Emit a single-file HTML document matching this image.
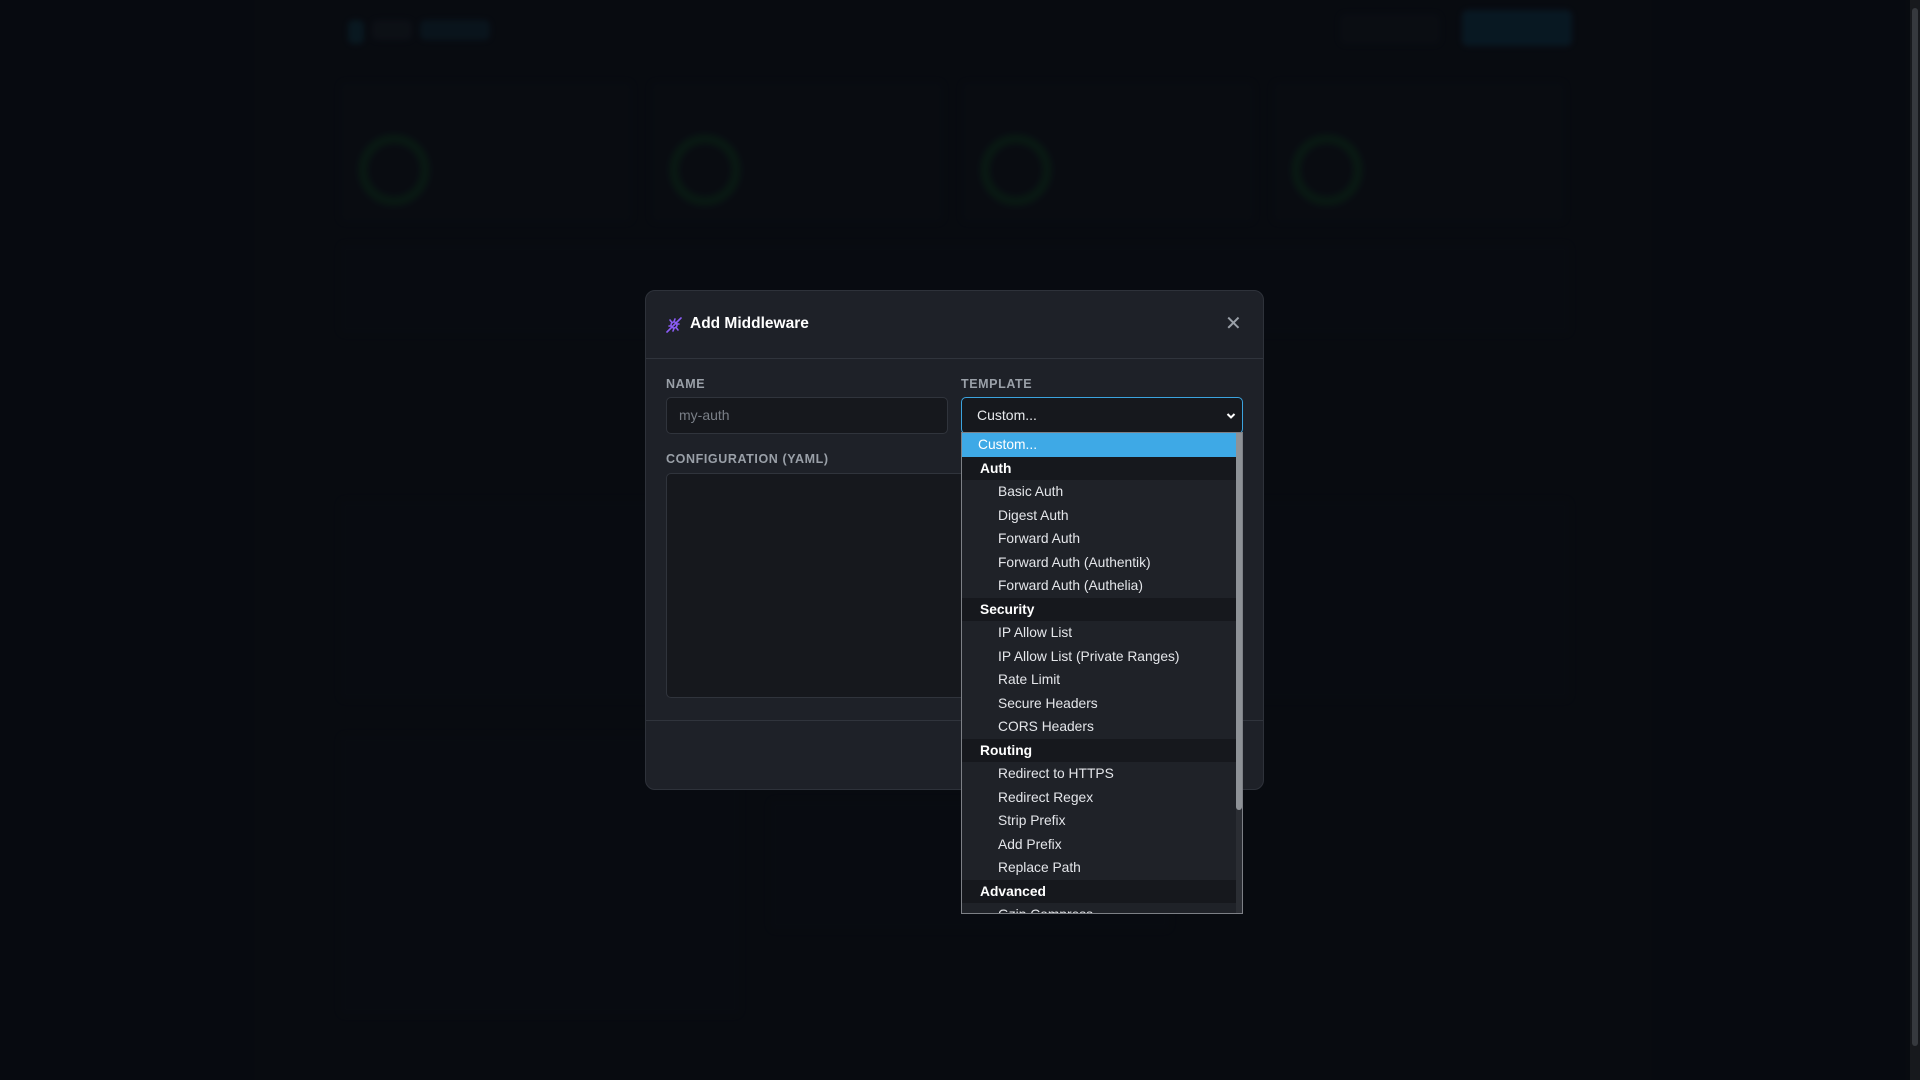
<!DOCTYPE html>
<html><head><meta charset="utf-8"><style>
*{box-sizing:border-box;margin:0;padding:0}
html,body{width:1920px;height:1080px;overflow:hidden;background:#0a0e15;font-family:"Liberation Sans",Arial,sans-serif}
.bg{position:absolute;inset:0;filter:blur(3px);opacity:.6}
.b{position:absolute;border-radius:6px}
.overlay{position:absolute;inset:0;background:rgba(5,7,11,.5)}
.sb{position:absolute;left:1910px;top:0;width:10px;height:1080px;background:#17191d}
.sb div{position:absolute;left:2px;top:8px;width:6px;height:1038px;background:#36393e;border-radius:3px}
.modal{position:absolute;left:645px;top:290px;width:619px;height:500px;background:#1e2128;border:1px solid #2e323a;border-radius:10px}
.hd{position:absolute;left:0;top:0;width:100%;height:68px;border-bottom:1px solid #30343c}
.title{position:absolute;left:44px;top:24px;color:#fff;font-weight:bold;font-size:15.5px}
.close{position:absolute;left:579px;top:20px;color:#9aa0a8;font-size:20px}
.lbl{position:absolute;color:#9aa0a8;font-weight:bold;font-size:12.5px;letter-spacing:.6px}
.inp{position:absolute;background:#16181d;border:1px solid #30343c;border-radius:5px}
.ft{position:absolute;left:0;top:429px;width:100%;border-top:1px solid #30343c}
.dd{position:absolute;left:961px;top:432px;width:282px;height:482px;background:#1f2228;border:1px solid #7d8086;overflow:hidden}
.row{height:23.5px;line-height:23.5px;font-size:13.8px;color:#e4e6ea;padding-left:36px;width:276px}
.row.g{background:#16181d;font-weight:bold;padding-left:18px;color:#fff}
.row.sel{background:#3ea9e6;color:#fff;padding-left:16px}
.dsb{position:absolute;right:0;top:0;width:6px;height:100%;background:#2a2d33}
.dsb div{position:absolute;left:0;top:0;width:6px;height:377px;background:#8e9297;border-radius:0 0 3px 3px}
</style></head><body>
<div class="bg">
<div class="b" style="left:348px;top:20px;width:16px;height:24px;background:#0f3a4a"></div>
<div class="b" style="left:372px;top:20px;width:40px;height:20px;background:#1a1f27"></div>
<div class="b" style="left:420px;top:20px;width:70px;height:20px;background:#0f2e3d"></div>
<div class="b" style="left:1462px;top:10px;width:110px;height:36px;background:#0d3a52"></div>
<div class="b" style="left:1340px;top:14px;width:100px;height:30px;background:#12161d"></div>
<div class="b" style="left:340px;top:82px;width:292px;height:140px;background:#0e1219"></div>
<div class="b" style="left:651px;top:82px;width:292px;height:140px;background:#0e1219"></div>
<div class="b" style="left:962px;top:82px;width:292px;height:140px;background:#0e1219"></div>
<div class="b" style="left:1273px;top:82px;width:292px;height:140px;background:#0e1219"></div>
<div style="position:absolute;left:358px;top:134px;width:72px;height:72px;border-radius:50%;border:10px solid #0f3a1e"></div>
<div style="position:absolute;left:669px;top:134px;width:72px;height:72px;border-radius:50%;border:10px solid #0f3a1e"></div>
<div style="position:absolute;left:980px;top:134px;width:72px;height:72px;border-radius:50%;border:10px solid #0f3a1e"></div>
<div style="position:absolute;left:1291px;top:134px;width:72px;height:72px;border-radius:50%;border:10px solid #0f3a1e"></div>
<div class="b" style="left:340px;top:244px;width:1230px;height:90px;background:#0d1118"></div>
<div class="b" style="left:340px;top:500px;width:410px;height:200px;background:#0d1118"></div>
<div class="b" style="left:1160px;top:500px;width:410px;height:200px;background:#0d1118"></div>
<div class="b" style="left:340px;top:735px;width:400px;height:280px;background:#0d1118"></div>
<div class="b" style="left:770px;top:800px;width:400px;height:130px;background:#0d1118"></div>
</div>
<div class="overlay"></div>
<div class="sb"><div></div></div>
<div class="modal">
<div class="hd">
<svg style="position:absolute;left:20px;top:26px" width="16" height="16" viewBox="0 0 16 16" fill="none" stroke="#8b5cf6" stroke-width="1.6" stroke-linecap="round"><line x1="1" y1="15" x2="15" y2="1"/><circle cx="8" cy="8" r="3"/><line x1="4" y1="3" x2="5.5" y2="5"/><line x1="12" y1="13" x2="10.5" y2="11"/><line x1="3" y1="9" x2="5" y2="9"/><line x1="13" y1="7" x2="11" y2="7"/><line x1="9" y1="2" x2="8" y2="4.5"/><line x1="7" y1="14" x2="8" y2="11.5"/></svg>
<div class="title">Add Middleware</div>
<div class="close">✕</div>
</div>
<div class="lbl" style="left:20px;top:86px">NAME</div>
<div class="lbl" style="left:315px;top:86px">TEMPLATE</div>
<div class="inp" style="left:20px;top:106px;width:282px;height:37px"><span style="position:absolute;left:12px;top:9px;color:#7a7f87;font-size:14px">my-auth</span></div>
<div class="inp" style="left:315px;top:106px;width:282px;height:37px;border-color:#3ba3de"><span style="position:absolute;left:15px;top:9px;color:#e8eaed;font-size:14px">Custom...</span>
<svg style="position:absolute;left:264px;top:14px" width="10" height="8" viewBox="0 0 10 8"><path d="M1.5 2 L5 5.5 L8.5 2" stroke="#fff" stroke-width="2" fill="none"/></svg></div>
<div class="lbl" style="left:20px;top:161px">CONFIGURATION (YAML)</div>
<div class="inp" style="left:20px;top:182px;width:577px;height:225px"></div>
<div class="ft"></div>
</div>
<div class="dd">
<div class="row sel">Custom...</div>
<div class="row g">Auth</div>
<div class="row">Basic Auth</div>
<div class="row">Digest Auth</div>
<div class="row">Forward Auth</div>
<div class="row">Forward Auth (Authentik)</div>
<div class="row">Forward Auth (Authelia)</div>
<div class="row g">Security</div>
<div class="row">IP Allow List</div>
<div class="row">IP Allow List (Private Ranges)</div>
<div class="row">Rate Limit</div>
<div class="row">Secure Headers</div>
<div class="row">CORS Headers</div>
<div class="row g">Routing</div>
<div class="row">Redirect to HTTPS</div>
<div class="row">Redirect Regex</div>
<div class="row">Strip Prefix</div>
<div class="row">Add Prefix</div>
<div class="row">Replace Path</div>
<div class="row g">Advanced</div>
<div class="row">Gzip Compress</div>
<div class="dsb"><div></div></div>
</div>
</body></html>
